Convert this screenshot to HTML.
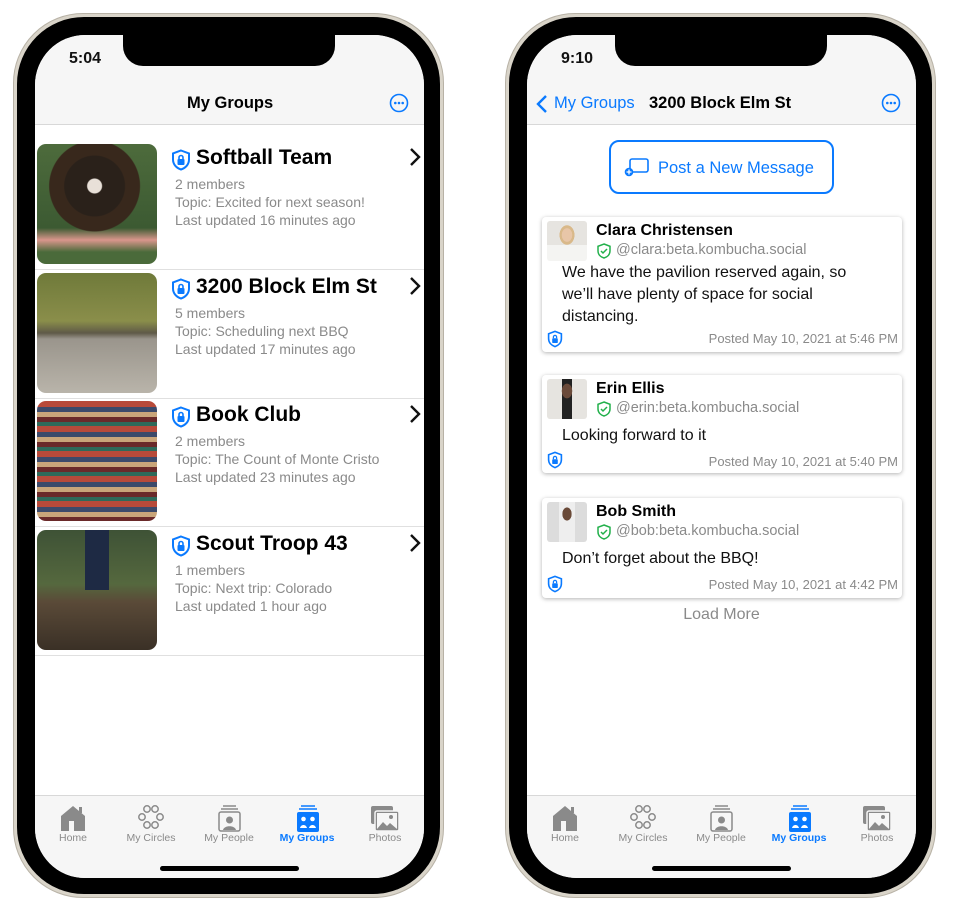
<!DOCTYPE html>
<html><head><meta charset="utf-8"><style>
*{box-sizing:border-box;margin:0;padding:0}
body{width:956px;height:914px;background:#fff;position:relative;overflow:hidden;font-family:"Liberation Sans",sans-serif}
.a{position:absolute}
.frame{position:absolute;width:431px;height:885px;top:13px;border-radius:70px;background:#d9d4c9;border:1px solid #b8b2a6}
.bez{position:absolute;left:3px;top:3px;right:3px;bottom:3px;border-radius:67px;background:#000}
.scr{position:absolute;left:18px;top:18px;width:389px;height:843px;border-radius:50px;background:#fff;overflow:hidden}
.nav{position:absolute;left:0;top:0;width:389px;height:90px;background:#f6f6f6;border-bottom:1px solid #d8d8d8}
.notch{position:absolute;left:88px;top:0;width:212px;height:31px;background:#000;border-radius:0 0 20px 20px}
.time{position:absolute;top:15px;font-size:16px;font-weight:bold;color:#111}
.tab{position:absolute;left:0;top:760px;width:389px;height:83px;background:#f6f6f6;border-top:1px solid #d8d8d8}
.tl{position:absolute;top:36px;font-size:10.5px;color:#8a8a8a;width:80px;text-align:center}
.hi{position:absolute;left:125px;top:831px;width:139px;height:5px;border-radius:3px;background:#000}
.row{position:absolute;left:0;width:389px;height:129px;border-bottom:1px solid #e0e0e0}
.img{position:absolute;left:2px;top:3px;width:120px;height:120px;border-radius:9px;overflow:hidden}
.tt{position:absolute;left:161px;top:5px;font-size:21px;font-weight:bold;color:#000}
.sub{position:absolute;left:140px;top:34px;font-size:14px;line-height:18px;color:#8a8a8a}
.chev{position:absolute;left:374px;top:6px}
.card{position:absolute;left:15px;width:360px;background:#fff;border-radius:4px;box-shadow:0 1px 4px rgba(0,0,0,.3)}
.av{position:absolute;left:5px;top:4px;width:40px;height:40px;background:#e2e0dc;border-radius:3px}
.nm{position:absolute;left:54px;top:5px;font-size:16px;font-weight:bold}
.hd{position:absolute;left:54px;top:25px;font-size:14.5px;color:#8a8a8a;padding-left:20px}
.body{position:absolute;left:20px;font-size:16px;line-height:22px;color:#111}
.dt{position:absolute;right:4px;font-size:13px;color:#8a8a8a}
</style></head><body>

<svg width="0" height="0" style="position:absolute"><defs>
<symbol id="sh" viewBox="0 0 20 22"><path d="M10 1.5L18 4.5V10.5C18 15.5 14.5 19 10 20.5C5.5 19 2 15.5 2 10.5V4.5Z" fill="none" stroke="#0a7aff" stroke-width="2"/><rect x="6.5" y="10" width="7" height="6" rx="1" fill="#0a7aff"/><path d="M8 10V8.5a2 2 0 014 0V10" fill="none" stroke="#0a7aff" stroke-width="1.6"/></symbol>
<symbol id="gs" viewBox="0 0 16 16"><path d="M8 1L14 3.3V8C14 11.6 11.3 14 8 15C4.7 14 2 11.6 2 8V3.3Z" fill="none" stroke="#22b04b" stroke-width="1.5"/><path d="M5 8l2 2 4-4" fill="none" stroke="#22b04b" stroke-width="1.5"/></symbol>
<symbol id="ch" viewBox="0 0 12 20"><path d="M2 2l8 8-8 8" fill="none" stroke="#111" stroke-width="2.4"/></symbol>
<symbol id="more" viewBox="0 0 20 20"><circle cx="10" cy="10" r="8.5" fill="none" stroke="#0a7aff" stroke-width="1.6"/><circle cx="6.3" cy="10" r="1.3" fill="#0a7aff"/><circle cx="10" cy="10" r="1.3" fill="#0a7aff"/><circle cx="13.7" cy="10" r="1.3" fill="#0a7aff"/></symbol>
<symbol id="tabs" viewBox="0 0 389 40">
<g fill="#8a8a8a"><path d="M26 12L38 2 50 12V27H26Z"/><rect x="44" y="3" width="3" height="6"/></g><rect x="34" y="17" width="5" height="10" fill="#f6f6f6"/>
<g fill="none" stroke="#8a8a8a" stroke-width="1.5"><circle cx="112" cy="5" r="3.2"/><circle cx="120" cy="5" r="3.2"/><circle cx="107" cy="13" r="3.2"/><circle cx="125" cy="13" r="3.2"/><circle cx="112" cy="21" r="3.2"/><circle cx="120" cy="21" r="3.2"/>
<rect x="184" y="8" width="21" height="19" rx="2"/><path d="M186 5h17M188 2h13"/></g>
<circle cx="194.5" cy="16" r="3.5" fill="#8a8a8a"/><path d="M188 26c1-5 12-5 13 0z" fill="#8a8a8a"/>
<rect x="262" y="8" width="22" height="20" rx="2" fill="#0a7aff"/><path d="M264 5h18M266 2h14" stroke="#0a7aff" stroke-width="1.6"/>
<circle cx="268.5" cy="15" r="2.3" fill="#fff"/><circle cx="277.5" cy="15" r="2.3" fill="#fff"/><path d="M265 24c1-4 6-4 7 0zM274 24c1-4 6-4 7 0z" fill="#fff"/>
<rect x="336" y="2" width="22" height="18" rx="2" fill="#8a8a8a"/><rect x="340" y="7" width="24" height="20" rx="2" fill="#8a8a8a" stroke="#f6f6f6" stroke-width="1.5"/><rect x="342" y="9" width="20" height="16" fill="#f6f6f6"/><path d="M342 25l6-7 4 4 3-3 7 6z" fill="#8a8a8a"/><circle cx="356" cy="13" r="2" fill="#8a8a8a"/>
</symbol>
</defs></svg>

<!-- LEFT PHONE -->
<div class="frame" style="left:13px">
<div class="bez"><div class="scr">
 <div class="nav">
  <div class="time" style="left:34px">5:04</div>
  <div class="a" style="left:152px;top:59px;font-size:16.5px;font-weight:bold">My Groups</div>
  <svg class="a" style="left:354px;top:58px" width="20" height="20"><use href="#more"/></svg>
 </div>
 <div class="row" style="top:106px"><div class="img" style="background:radial-gradient(circle at 48% 35%,#e8e0d8 0 7%,#2a211a 8% 30%,#38281c 31% 45%,transparent 46%),linear-gradient(180deg,#4d6b3c,#3c5a32 70%,#d9968c 80%,#4a6a3a 90%)"></div>
  <svg class="a" style="left:136px;top:8px" width="20" height="22"><use href="#sh"/></svg><div class="tt">Softball Team</div>
  <div class="sub">2 members<br>Topic: Excited for next season!<br>Last updated 16 minutes ago</div>
  <svg class="chev" width="12" height="20"><use href="#ch"/></svg></div>
 <div class="row" style="top:235px"><div class="img" style="background:linear-gradient(180deg,#6f7a3a 0,#8a8e4a 40%,#5f5a48 50%,#9a958c 55%,#b9b4aa 100%)"></div>
  <svg class="a" style="left:136px;top:8px" width="20" height="22"><use href="#sh"/></svg><div class="tt">3200 Block Elm St</div>
  <div class="sub">5 members<br>Topic: Scheduling next BBQ<br>Last updated 17 minutes ago</div>
  <svg class="chev" width="12" height="20"><use href="#ch"/></svg></div>
 <div class="row" style="top:363px"><div class="img" style="background:repeating-linear-gradient(180deg,#b84a3a 0 6px,#3c4a6a 6px 11px,#c9a57a 11px 16px,#6a2a2a 16px 21px,#2f6a5a 21px 25px)"></div>
  <svg class="a" style="left:136px;top:8px" width="20" height="22"><use href="#sh"/></svg><div class="tt">Book Club</div>
  <div class="sub">2 members<br>Topic: The Count of Monte Cristo<br>Last updated 23 minutes ago</div>
  <svg class="chev" width="12" height="20"><use href="#ch"/></svg></div>
 <div class="row" style="top:492px"><div class="img" style="background:linear-gradient(90deg,transparent 40%,#1e2a44 40% 60%,transparent 60%) 0 0/100% 50% no-repeat,linear-gradient(180deg,#3e5236 0,#55683e 45%,#5a4a38 60%,#3a3026 100%)"></div>
  <svg class="a" style="left:136px;top:8px" width="20" height="22"><use href="#sh"/></svg><div class="tt">Scout Troop 43</div>
  <div class="sub">1 members<br>Topic: Next trip: Colorado<br>Last updated 1 hour ago</div>
  <svg class="chev" width="12" height="20"><use href="#ch"/></svg></div>
 <div class="tab"><svg class="a" style="left:0;top:8px" width="389" height="40"><use href="#tabs"/></svg>
  <div class="tl" style="left:-2px">Home</div><div class="tl" style="left:76px">My Circles</div><div class="tl" style="left:154px">My People</div><div class="tl" style="left:232px;color:#0a7aff;font-weight:bold">My Groups</div><div class="tl" style="left:310px">Photos</div></div>
 <div class="hi"></div>
 <div class="notch"></div>
</div></div></div>

<!-- RIGHT PHONE -->
<div class="frame" style="left:505px">
<div class="bez"><div class="scr">
 <div class="nav">
  <div class="time" style="left:34px">9:10</div>
  <svg class="a" style="left:9px;top:59px" width="12" height="20"><path d="M10 2L2 10l8 8" fill="none" stroke="#0a7aff" stroke-width="2.4"/></svg>
  <div class="a" style="left:27px;top:59px;font-size:16.5px;color:#0a7aff">My Groups</div>
  <div class="a" style="left:122px;top:59px;font-size:16.5px;font-weight:bold">3200 Block Elm St</div>
  <svg class="a" style="left:354px;top:58px" width="20" height="20"><use href="#more"/></svg>
 </div>
 <div class="a" style="left:82px;top:105px;width:225px;height:54px;border:2px solid #0a7aff;border-radius:10px"></div>
 <svg class="a" style="left:97px;top:122px" width="26" height="22"><rect x="6" y="2" width="18" height="13" rx="2" fill="none" stroke="#0a7aff" stroke-width="1.6"/><circle cx="5" cy="15" r="4.3" fill="#0a7aff"/><path d="M5 12.5v5M2.5 15h5" stroke="#fff" stroke-width="1.3"/></svg>
 <div class="a" style="left:131px;top:124px;font-size:16.5px;color:#0a7aff">Post a New Message</div>

 <div class="card" style="top:182px;height:135px"><div class="av" style="background:radial-gradient(ellipse at 50% 35%,#e8c6a8 0 18%,#d9b98a 19% 26%,transparent 27%),linear-gradient(180deg,#e6e4e0 60%,#f4f4f2 60%)"></div>
  <div class="nm">Clara Christensen</div><div class="hd"><svg class="a" style="left:0;top:1px" width="16" height="16"><use href="#gs"/></svg>@clara:beta.kombucha.social</div>
  <div class="body" style="top:45px">We have the pavilion reserved again, so<br>we’ll have plenty of space for social<br>distancing.</div>
  <svg class="a" style="left:5px;top:113px" width="16" height="18"><use href="#sh"/></svg><div class="dt" style="top:114px">Posted May 10, 2021 at 5:46 PM</div></div>

 <div class="card" style="top:340px;height:98px"><div class="av" style="background:radial-gradient(ellipse at 50% 30%,#6a4a3a 0 18%,transparent 19%),linear-gradient(90deg,#e6e4e0 38%,#222 38% 62%,#e6e4e0 62%)"></div>
  <div class="nm">Erin Ellis</div><div class="hd"><svg class="a" style="left:0;top:1px" width="16" height="16"><use href="#gs"/></svg>@erin:beta.kombucha.social</div>
  <div class="body" style="top:50px">Looking forward to it</div>
  <svg class="a" style="left:5px;top:76px" width="16" height="18"><use href="#sh"/></svg><div class="dt" style="top:79px">Posted May 10, 2021 at 5:40 PM</div></div>

 <div class="card" style="top:463px;height:100px"><div class="av" style="background:radial-gradient(ellipse at 50% 30%,#6a4a38 0 16%,transparent 17%),linear-gradient(90deg,#dcdcdc 30%,#eee 30% 70%,#dcdcdc 70%)"></div>
  <div class="nm">Bob Smith</div><div class="hd"><svg class="a" style="left:0;top:1px" width="16" height="16"><use href="#gs"/></svg>@bob:beta.kombucha.social</div>
  <div class="body" style="top:50px">Don’t forget about the BBQ!</div>
  <svg class="a" style="left:5px;top:77px" width="16" height="18"><use href="#sh"/></svg><div class="dt" style="top:79px">Posted May 10, 2021 at 4:42 PM</div></div>

 <div class="a" style="left:0;width:389px;text-align:center;top:571px;font-size:16px;color:#8a8a8a">Load More</div>

 <div class="tab"><svg class="a" style="left:0;top:8px" width="389" height="40"><use href="#tabs"/></svg>
  <div class="tl" style="left:-2px">Home</div><div class="tl" style="left:76px">My Circles</div><div class="tl" style="left:154px">My People</div><div class="tl" style="left:232px;color:#0a7aff;font-weight:bold">My Groups</div><div class="tl" style="left:310px">Photos</div></div>
 <div class="hi"></div>
 <div class="notch"></div>
</div></div></div>
</body></html>
